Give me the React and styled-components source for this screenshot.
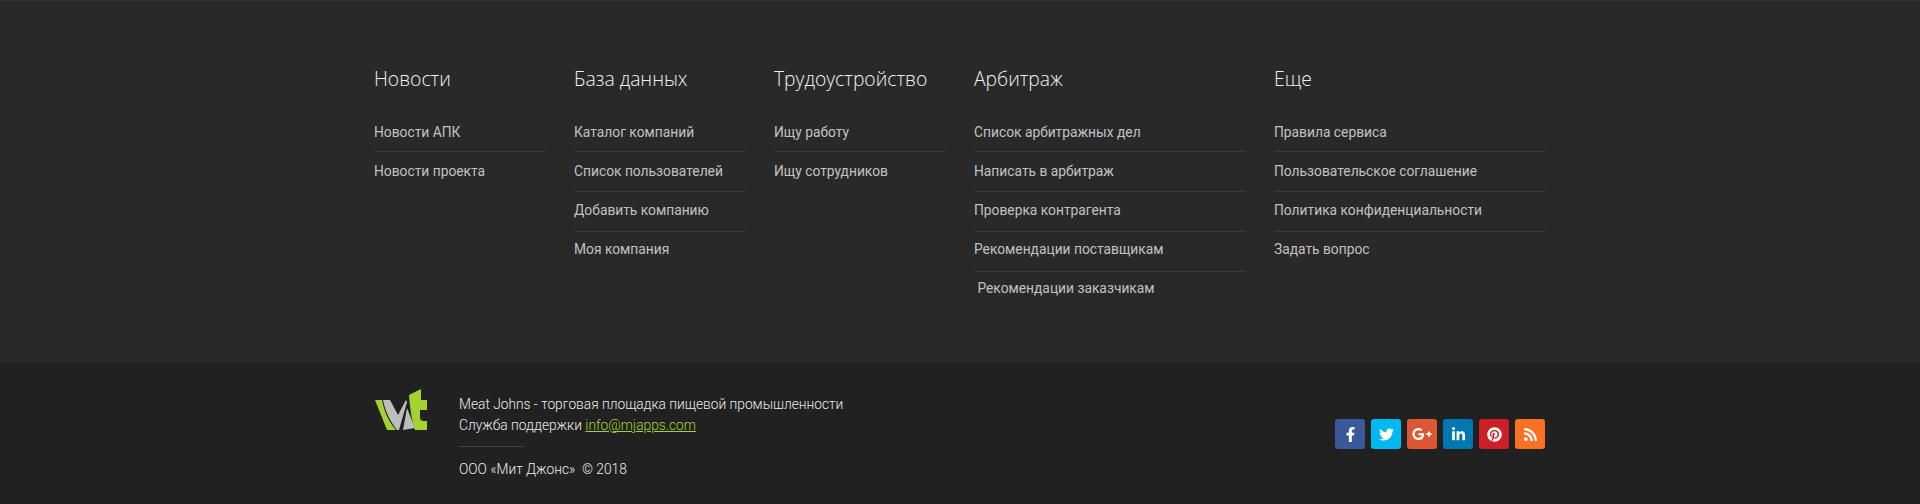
import React from 'react';
import styled, { createGlobalStyle } from 'styled-components';
import { FaFacebookF, FaTwitter, FaGooglePlusG, FaLinkedinIn, FaPinterest, FaRss } from 'react-icons/fa';

const columns = [
  { title: 'Новости', width: 170, links: ['Новости АПК', 'Новости проекта'] },
  { title: 'База данных', width: 170, links: ['Каталог компаний', 'Список пользователей', 'Добавить компанию', 'Моя компания'] },
  { title: 'Трудоустройство', width: 170, links: ['Ищу работу', 'Ищу сотрудников'] },
  {
    title: 'Арбитраж',
    width: 270,
    links: ['Список арбитражных дел', 'Написать в арбитраж', 'Проверка контрагента', 'Рекомендации поставщикам', ' Рекомендации заказчикам']
  },
  { title: 'Еще', width: 270, links: ['Правила сервиса', 'Пользовательское соглашение', 'Политика конфиденциальности', 'Задать вопрос'] }
];

const socials = [
  { name: 'facebook', color: '#3b5998', icon: FaFacebookF },
  { name: 'twitter', color: '#00b9f1', icon: FaTwitter },
  { name: 'google', color: '#dd5734', icon: FaGooglePlusG, size: 20 },
  { name: 'linkedin', color: '#0077b1', icon: FaLinkedinIn },
  { name: 'pinterest', color: '#cc1f27', icon: FaPinterest },
  { name: 'rss', color: '#f97124', icon: FaRss }
];

export default function App() {
  return (
    <Page>
      <GlobalStyle />
      <Top>
        <Container>
          {columns.map(col => (
            <Column key={col.title} $width={col.width}>
              <Heading>{col.title}</Heading>
              <LinkList>
                {col.links.map((link, i) => (
                  <LinkItem key={link} $index={i}>{link}</LinkItem>
                ))}
              </LinkList>
            </Column>
          ))}
        </Container>
      </Top>
      <Bottom>
        <BottomInner>
          <Logo viewBox="0 0 52 42" aria-label="logo">
            <path d="M0 11 H7 C9 22 14 33 21 41 H12 Z" fill="#a4d233" />
            <path d="M8 11 H15 L23 26 L31 11 L32 13 L24 41 H22 C15 32 10 22 8 11 Z" fill="#bdbdbd" />
            <path d="M32 19 L40 39 L28 41 Z" fill="#bdbdbd" />
            <path d="M34 6 L46 0 V11 H52 V21 H45 V29 C45 31 47 32 49 32 H52 V41 H40 C37 33 35 20 34 6 Z" fill="#a4d233" />
          </Logo>
          <Info>
            <InfoLine>Meat Johns - торговая площадка пищевой промышленности</InfoLine>
            <InfoLine>
              Служба поддержки <Mail href="#">info@mjapps.com</Mail>
            </InfoLine>
            <Divider />
            <InfoLine>ООО «Мит Джонс»&nbsp; © 2018</InfoLine>
          </Info>
          <Socials>
            {socials.map(({ name, color, icon: Icon, size }) => (
              <Social key={name} $color={color} aria-label={name}>
                <Icon size={size || 15} />
              </Social>
            ))}
          </Socials>
        </BottomInner>
      </Bottom>
    </Page>
  );
}

const GlobalStyle = createGlobalStyle`
  html, body {
    margin: 0;
    padding: 0;
    background: #212121;
  }
`;

const Page = styled.div`
  width: 1920px;
  height: 504px;
  overflow: hidden;
  font-family: Roboto, 'Open Sans', sans-serif;
`;

const Top = styled.div`
  height: 363px;
  box-sizing: border-box;
  background: #292929;
  border-top: 1px solid #333;
  padding-top: 64px;
`;

const Container = styled.div`
  display: flex;
  gap: 30px;
  width: 1170px;
  margin: 0 auto;
`;

const Column = styled.div`
  width: ${props => props.$width}px;
  flex: none;
`;

const Heading = styled.h4`
  margin: 0 0 19px;
  color: #f2f2f2;
  font-family: 'Open Sans', sans-serif;
  font-size: 19.3px;
  font-weight: 300;
  line-height: 28px;
  text-indent: -1px;
  white-space: nowrap;
`;

const LinkList = styled.ul`
  list-style: none;
  margin: 0;
  padding: 0;
`;

/* the text rows sit 39px apart while the rules sit 40px apart */
const LinkItem = styled.li`
  height: 40px;
  padding-top: 1px;
  line-height: ${props => 38 - props.$index * 2}px;
  box-sizing: border-box;
  border-bottom: 1px solid #3c3c3c;
  color: #c2c2c2;
  font-size: 13.8px;
  font-weight: 400;
  text-indent: -1px;
  white-space: pre;

  &:last-child {
    border-bottom: 0;
  }
`;

const Bottom = styled.div`
  height: 141px;
  background: #212121;
`;

const BottomInner = styled.div`
  display: flex;
  align-items: flex-start;
  width: 1170px;
  height: 100%;
  margin: 0 auto;
`;

const Logo = styled.svg`
  width: 52px;
  height: 42px;
  flex: none;
  margin-top: 26px;
`;

const Info = styled.div`
  margin: 31px 0 0 32px;
  color: #ececec;
  font-size: 13.75px;
  font-weight: 300;
`;

const InfoLine = styled.div`
  line-height: 21px;
  white-space: nowrap;
`;

const Mail = styled.a`
  color: #a4d233;
  text-decoration: underline;
`;

const Divider = styled.div`
  width: 64px;
  height: 1px;
  margin: 10px 0 12px;
  background: #444;
`;

const Socials = styled.div`
  display: flex;
  gap: 6px;
  margin: 56px 0 0 auto;
`;

const Social = styled.a`
  display: flex;
  align-items: center;
  justify-content: center;
  width: 30px;
  height: 30px;
  border-radius: 3px;
  background: ${props => props.$color};
  color: #fff;
`;
